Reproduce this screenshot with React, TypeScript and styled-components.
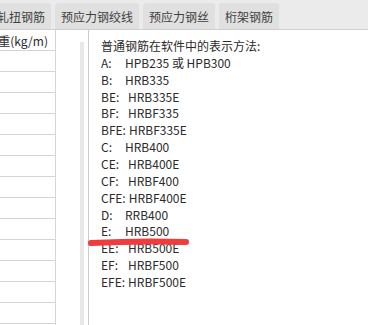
import React from "react";
import styled, { createGlobalStyle } from "styled-components";

const GlobalStyle = createGlobalStyle`
  html, body {
    margin: 0;
    padding: 0;
    background: #ffffff;
  }
  body {
    font-family: "Noto Sans CJK SC", "Noto Sans", sans-serif;
    color: #2b2b2b;
  }
`;

const tabs = ["轧扭钢筋", "预应力钢绞线", "预应力钢丝", "桁架钢筋"];

const grades: [string, string][] = [
  ["A:", "HPB235 或 HPB300"],
  ["B:", "HRB335"],
  ["BE:", "HRB335E"],
  ["BF:", "HRBF335"],
  ["BFE:", "HRBF335E"],
  ["C:", "HRB400"],
  ["CE:", "HRB400E"],
  ["CF:", "HRBF400"],
  ["CFE:", "HRBF400E"],
  ["D:", "RRB400"],
  ["E:", "HRB500"],
  ["EE:", "HRB500E"],
  ["EF:", "HRBF500"],
  ["EFE:", "HRBF500E"],
];

const App: React.FC = () => {
  return (
    <Page>
      <GlobalStyle />
      <TabBar>
        <TabStrip>
          {tabs.map((t) => (
            <Tab key={t}>{t}</Tab>
          ))}
        </TabStrip>
      </TabBar>
      <Body>
        <Table>
          <HeaderCell>重(kg/m)</HeaderCell>
          {Array.from({ length: 13 }, (_, i) => (
            <Row key={i} />
          ))}
        </Table>
        <Gutter>
          <ScrollTrack />
        </Gutter>
        <InfoPanel>
          <InfoLine>普通钢筋在软件中的表示方法:</InfoLine>
          {grades.map(([code, name]) => (
            <InfoLine key={code}>
              <Code width={code.length >= 3 ? 24 : 21}>{code}</Code>
              {name}
            </InfoLine>
          ))}
        </InfoPanel>
      </Body>
      <Mark width="368" height="325" viewBox="0 0 368 325">
        <path
          d="M91 243 Q 140 240.5 186 242"
          stroke="#f03c3c"
          strokeWidth="6"
          strokeLinecap="round"
          fill="none"
        />
      </Mark>
    </Page>
  );
};

const Page = styled.div`
  position: relative;
  width: 368px;
  height: 325px;
  overflow: hidden;
  background: #ffffff;
`;

const TabBar = styled.div`
  height: 29px;
  background: #ebebeb;
  border-bottom: 1px solid #cfcfcf;
  overflow: hidden;
  display: flex;
  align-items: flex-end;
`;

const TabStrip = styled.div`
  display: flex;
  gap: 4px;
  margin-left: -9px;
  height: 26px;
`;

const Tab = styled.div`
  display: flex;
  align-items: center;
  padding: 0 6px;
  background: #e0e0e0;
  border-radius: 3px 3px 0 0;
  font-size: 12px;
  color: #404040;
  white-space: nowrap;
`;

const Body = styled.div`
  display: flex;
  height: 295px;
`;

const Table = styled.div`
  width: 55px;
  border-right: 1px solid #d4d4d4;
  display: flex;
  flex-direction: column;
  overflow: hidden;
`;

const HeaderCell = styled.div`
  height: 20px;
  flex: none;
  border-bottom: 1px solid #d4d4d4;
  display: flex;
  align-items: center;
  justify-content: flex-end;
  padding-right: 7px;
  font-size: 12px;
  color: #2b2b2b;
  white-space: nowrap;
`;

const Row = styled.div`
  height: 20px;
  flex: none;
  border-bottom: 1px solid #d4d4d4;
`;

const Gutter = styled.div`
  width: 33px;
  border-right: 1px solid #cccccc;
  display: flex;
  justify-content: flex-end;
  padding: 12px 4px 0 0;
  box-sizing: border-box;
`;

const ScrollTrack = styled.div`
  width: 4px;
  height: 100%;
  background: #e8e8e8;
`;

const InfoPanel = styled.div`
  flex: 1;
  padding: 8px 0 0 12px;
  font-size: 12px;
`;

const InfoLine = styled.div`
  line-height: 16.86px;
  white-space: nowrap;
  color: #2b2b2b;
`;

const Code = styled.span<{ width: number }>`
  display: inline-block;
  min-width: ${(p) => p.width}px;
  padding-right: 3px;
`;

const Mark = styled.svg`
  position: absolute;
  left: 0;
  top: 0;
  pointer-events: none;
`;

export default App;
